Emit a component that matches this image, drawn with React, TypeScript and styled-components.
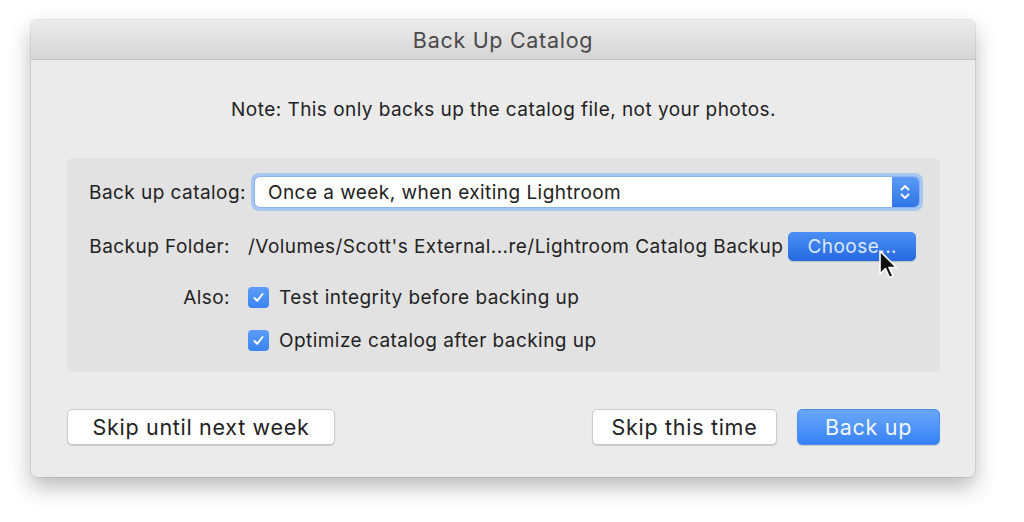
import React from "react";
import styled, { createGlobalStyle } from "styled-components";

const Global = createGlobalStyle`
  html, body { margin: 0; padding: 0; background: #ffffff; }
  body { font-family: "Inter", "Liberation Sans", Arial, sans-serif; color: #222222; letter-spacing: 0.45px; }
`;

const Page = styled.div`
  width: 1024px;
  height: 522px;
  padding: 20px 0 0 31px;
  box-sizing: border-box;
`;

const Window = styled.div`
  width: 944px;
  height: 457px;
  background: #ebebeb;
  border-radius: 6px;
  box-shadow: 0 10px 22px rgba(0, 0, 0, 0.28), 0 0 0 1px rgba(0, 0, 0, 0.08);
  display: flex;
  flex-direction: column;
  overflow: hidden;
`;

const TitleBar = styled.div`
  height: 39px;
  flex: none;
  background: linear-gradient(#ececec, #d5d5d5);
  border-bottom: 1px solid #c4c4c4;
  display: flex;
  align-items: center;
  justify-content: center;
  font-size: 21.5px;
  letter-spacing: 0.7px;
  color: #4a4a4a;
`;

const Body = styled.div`
  flex: 1;
  display: flex;
  flex-direction: column;
  padding: 0 35px 0 36px;
`;

const Note = styled.div`
  text-align: center;
  font-size: 19px;
  margin-top: 38px;
  height: 24px;
  line-height: 24px;
`;

const Panel = styled.div`
  margin-top: 36px;
  background: #e2e2e2;
  border-radius: 6px;
  height: 214px;
  box-sizing: border-box;
  padding: 15px 0 0 22px;
  display: flex;
  flex-direction: column;
`;

const Row = styled.div<{ $h: number }>`
  display: flex;
  align-items: center;
  height: ${(p) => p.$h}px;
  font-size: 19px;
`;

const Label = styled.div<{ $auto?: boolean }>`
  width: ${(p) => (p.$auto ? "auto" : "141px")};
  text-align: right;
  margin-right: ${(p) => (p.$auto ? "5px" : "18px")};
  flex: none;
`;

const SelectRing = styled.div`
  width: 672px;
  height: 38px;
  box-sizing: border-box;
  padding: 4px;
  border-radius: 8px;
  background: #a7c6f0;
`;

const SelectInner = styled.div`
  height: 100%;
  background: #ffffff;
  border-radius: 5px;
  display: flex;
  align-items: center;
  box-shadow: 0 0 0 1px #8fb3e8;
`;

const SelectText = styled.div`
  flex: 1;
  padding-left: 13px;
`;

const Stepper = styled.div`
  width: 27px;
  height: 100%;
  border-radius: 0 5px 5px 0;
  background: linear-gradient(#5a9cf6, #2f74e6);
  display: flex;
  align-items: center;
  justify-content: center;
`;

const Path = styled.div`
  white-space: nowrap;
`;

const ChooseWrap = styled.div`
  position: relative;
  margin-left: 5px;
`;

const ChooseBtn = styled.div`
  width: 128px;
  height: 29px;
  border-radius: 5px;
  background: linear-gradient(#4b8ff5, #2769e0);
  color: #dde9fb;
  display: flex;
  align-items: center;
  justify-content: center;
  font-size: 19px;
  box-shadow: 0 1px 1px rgba(0, 0, 0, 0.15);
`;

const Cursor = styled.svg`
  position: absolute;
  left: 90px;
  top: 18px;
`;

const Check = styled.div`
  width: 21px;
  height: 21px;
  border-radius: 4px;
  background: linear-gradient(#5b9cf7, #3a84f0);
  display: flex;
  align-items: center;
  justify-content: center;
  margin-right: 10px;
  flex: none;
`;

const Footer = styled.div`
  margin-top: 37px;
  display: flex;
  align-items: center;
`;

const Spacer = styled.div`
  flex: 1;
`;

const Button = styled.div<{ $w: number; $primary?: boolean }>`
  width: ${(p) => p.$w}px;
  height: 36px;
  box-sizing: border-box;
  border-radius: 5px;
  display: flex;
  align-items: center;
  justify-content: center;
  font-size: 21.5px;
  letter-spacing: 0.7px;
  background: ${(p) => (p.$primary ? "linear-gradient(#69a7fa, #3682f4)" : "#ffffff")};
  color: ${(p) => (p.$primary ? "#f2f7ff" : "#222222")};
  border: 1px solid ${(p) => (p.$primary ? "#4a8ef2" : "#cacaca")};
  box-shadow: 0 1px 1px rgba(0, 0, 0, 0.15);
  margin-left: ${(p) => (p.$primary ? "20px" : "0")};
`;

const CheckIcon = () => (
  <svg width="13" height="13" viewBox="0 0 13 13">
    <path d="M2.5 7 L5.2 9.8 L10.5 3" fill="none" stroke="#fff" strokeWidth="2" strokeLinecap="round" strokeLinejoin="round" />
  </svg>
);

export default function App() {
  return (
    <>
      <Global />
      <Page>
        <Window>
          <TitleBar>Back Up Catalog</TitleBar>
          <Body>
            <Note>Note: This only backs up the catalog file, not your photos.</Note>
            <Panel>
              <Row $h={38}>
                <Label $auto>Back up catalog:</Label>
                <SelectRing>
                  <SelectInner>
                    <SelectText>Once a week, when exiting Lightroom</SelectText>
                    <Stepper>
                      <svg width="12" height="20" viewBox="0 0 12 20">
                        <path d="M2.5 7.5 L6 4 L9.5 7.5 M2.5 12.5 L6 16 L9.5 12.5" fill="none" stroke="#fff" strokeWidth="1.8" strokeLinecap="round" strokeLinejoin="round" />
                      </svg>
                    </Stepper>
                  </SelectInner>
                </SelectRing>
              </Row>
              <Row $h={70}>
                <Label>Backup Folder:</Label>
                <Path>/Volumes/Scott's External...re/Lightroom Catalog Backup</Path>
                <ChooseWrap>
                  <ChooseBtn>Choose...</ChooseBtn>
                  <Cursor width="22" height="32" viewBox="0 0 22 32">
                    <path d="M2 1 L2 24 L7.5 18.5 L11.5 27.5 L15 26 L11 17.5 L18.5 17.5 Z" fill="#111" stroke="#fff" strokeWidth="1.6" strokeLinejoin="round" />
                  </Cursor>
                </ChooseWrap>
              </Row>
              <Row $h={32}>
                <Label>Also:</Label>
                <Check><CheckIcon /></Check>
                Test integrity before backing up
              </Row>
              <Row $h={54}>
                <Label />
                <Check><CheckIcon /></Check>
                Optimize catalog after backing up
              </Row>
            </Panel>
            <Footer>
              <Button $w={268}>Skip until next week</Button>
              <Spacer />
              <Button $w={185}>Skip this time</Button>
              <Button $w={143} $primary>Back up</Button>
            </Footer>
          </Body>
        </Window>
      </Page>
    </>
  );
}
